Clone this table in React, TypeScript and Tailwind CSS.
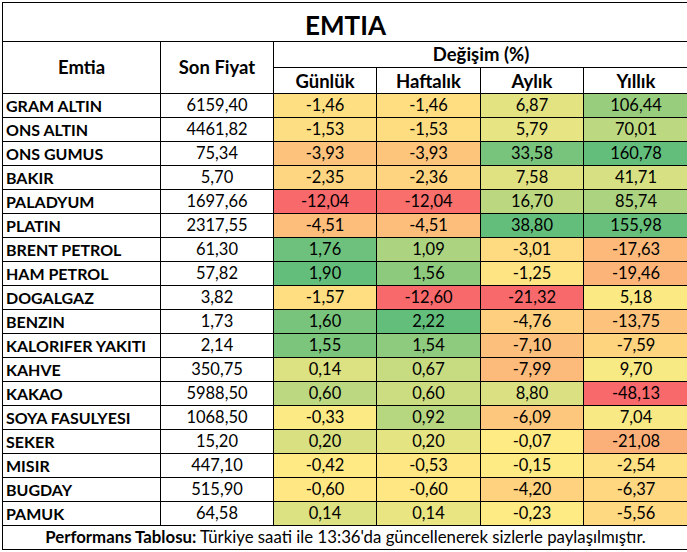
import React from "react";

type Row = [string, string, string, string, string, string];

const rows: Row[] = [
  ["GRAM ALTIN", "6159,40", "-1,46", "-1,46", "6,87", "106,44"],
  ["ONS ALTIN", "4461,82", "-1,53", "-1,53", "5,79", "70,01"],
  ["ONS GUMUS", "75,34", "-3,93", "-3,93", "33,58", "160,78"],
  ["BAKIR", "5,70", "-2,35", "-2,36", "7,58", "41,71"],
  ["PALADYUM", "1697,66", "-12,04", "-12,04", "16,70", "85,74"],
  ["PLATIN", "2317,55", "-4,51", "-4,51", "38,80", "155,98"],
  ["BRENT PETROL", "61,30", "1,76", "1,09", "-3,01", "-17,63"],
  ["HAM PETROL", "57,82", "1,90", "1,56", "-1,25", "-19,46"],
  ["DOGALGAZ", "3,82", "-1,57", "-12,60", "-21,32", "5,18"],
  ["BENZIN", "1,73", "1,60", "2,22", "-4,76", "-13,75"],
  ["KALORIFER YAKITI", "2,14", "1,55", "1,54", "-7,10", "-7,59"],
  ["KAHVE", "350,75", "0,14", "0,67", "-7,99", "9,70"],
  ["KAKAO", "5988,50", "0,60", "0,60", "8,80", "-48,13"],
  ["SOYA FASULYESI", "1068,50", "-0,33", "0,92", "-6,09", "7,04"],
  ["SEKER", "15,20", "0,20", "0,20", "-0,07", "-21,08"],
  ["MISIR", "447,10", "-0,42", "-0,53", "-0,15", "-2,54"],
  ["BUGDAY", "515,90", "-0,60", "-0,60", "-4,20", "-6,37"],
  ["PAMUK", "64,58", "0,14", "0,14", "-0,23", "-5,56"],
];

const num = (s: string) => parseFloat(s.replace(",", "."));

const RED = [248, 105, 107];
const YEL = [255, 235, 132];
const GRN = [99, 190, 123];

function lerp(a: number[], b: number[], t: number) {
  return a.map((v, i) => Math.round(v + (b[i] - v) * t));
}

function scale(values: number[]) {
  const sorted = [...values].sort((a, b) => a - b);
  const n = sorted.length;
  const min = sorted[0];
  const max = sorted[n - 1];
  const mid = n % 2 === 0 ? (sorted[n / 2 - 1] + sorted[n / 2]) / 2 : sorted[(n - 1) / 2];
  return (v: number) => {
    let c: number[];
    if (v <= mid) {
      const t = mid === min ? 1 : (v - min) / (mid - min);
      c = lerp(RED, YEL, Math.max(0, Math.min(1, t)));
    } else {
      const t = max === mid ? 1 : (v - mid) / (max - mid);
      c = lerp(YEL, GRN, Math.max(0, Math.min(1, t)));
    }
    return `rgb(${c[0]}, ${c[1]}, ${c[2]})`;
  };
}

const scales = [2, 3, 4, 5].map((ci) => scale(rows.map((r) => num(r[ci]))));

export default function App() {
  return (
    <div className="bg-white w-[687px] h-[552px] overflow-hidden pt-[2px] pl-[2px]">
      <div
        className="grid w-[687px] bg-black p-px gap-px grid-cols-[157px_112px_102px_103px_102px_104px] grid-rows-[38px_25px_25px_repeat(18,23px)_23px] text-black"
        style={{ fontFamily: "Lato, 'Open Sans', sans-serif" }}
      >
        <div className="col-span-6 bg-white flex items-center justify-center pt-[5px] text-[26px] font-bold leading-none">
          EMTIA
        </div>
        <div className="row-span-2 bg-white flex items-center justify-center text-[18.5px] font-bold leading-none">
          Emtia
        </div>
        <div className="row-span-2 bg-white flex items-center justify-center text-[18.5px] font-bold leading-none">
          Son Fiyat
        </div>
        <div className="col-span-4 bg-white flex items-center justify-center text-[18.5px] font-bold leading-none">
          Değişim (%)
        </div>
        {["Günlük", "Haftalık", "Aylık", "Yıllık"].map((h) => (
          <div
            key={h}
            className="bg-white flex items-center justify-center pt-[2px] text-[18.5px] font-bold leading-none"
          >
            {h}
          </div>
        ))}
        {rows.map((r) => (
          <React.Fragment key={r[0]}>
            <div className="bg-white flex items-center pl-[3px] text-[16px] font-bold leading-none">
              {r[0]}
            </div>
            <div className="bg-white flex items-center justify-center text-[16.5px] leading-none">
              {r[1]}
            </div>
            {[2, 3, 4, 5].map((ci) => (
              <div
                key={ci}
                className="flex items-center justify-center text-[16.5px] leading-none"
                style={{ backgroundColor: scales[ci - 2](num(r[ci])) }}
              >
                {r[ci]}
              </div>
            ))}
          </React.Fragment>
        ))}
        <div className="col-span-6 bg-white flex items-center justify-center text-[16.8px] leading-none">
          <span className="font-bold">Performans Tablosu:</span>
          <span>&nbsp;Türkiye saati ile 13:36'da güncellenerek sizlerle paylaşılmıştır.</span>
        </div>
      </div>
    </div>
  );
}
